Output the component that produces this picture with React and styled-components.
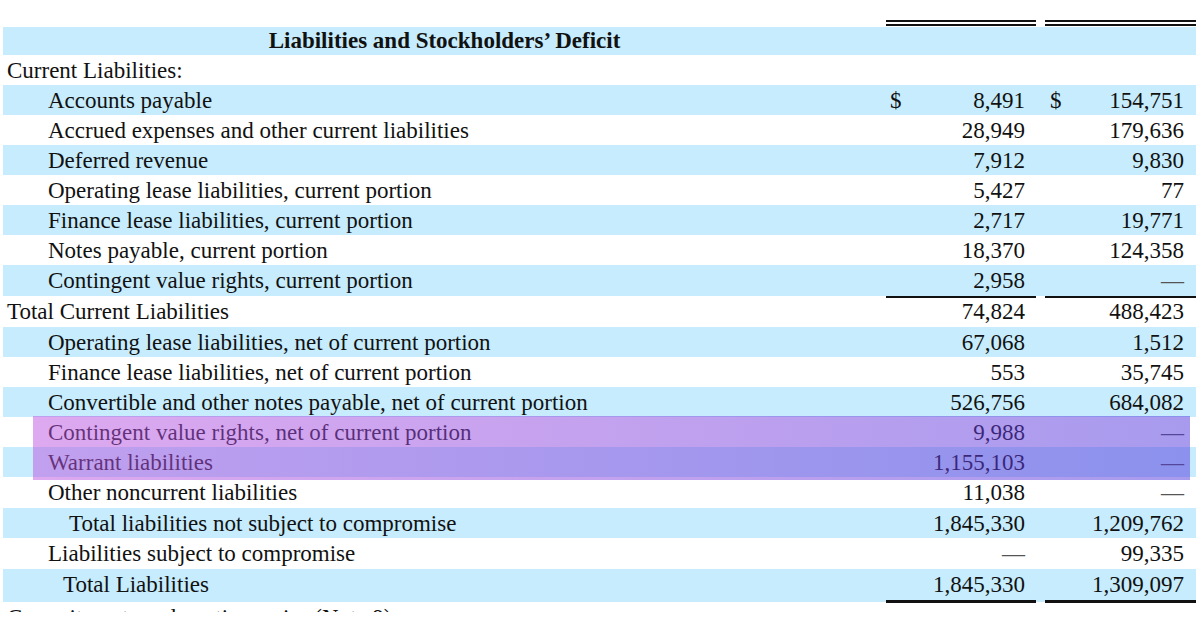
import React from "react";
import styled, { createGlobalStyle } from "styled-components";

const GlobalStyle = createGlobalStyle`
  html, body {
    margin: 0;
    padding: 0;
    background: #ffffff;
  }
`;

const BLUE = "#c6ecfd";

// Balance sheet page
const Page = styled.div`
  width: 1200px;
  height: 612px;
  overflow: hidden;
  background: #ffffff;
  font-family: "Liberation Serif", "Times New Roman", serif;
  font-size: 23px;
  color: #111111;
`;

const Sheet = styled.div`
  margin-left: 3px;
  width: 1193px;
  display: flex;
  flex-direction: column;
`;

const Row = styled.div`
  position: ${(p) => (p.$anchor ? "relative" : "static")};
  display: grid;
  grid-template-columns: 1fr 150px 9px 151px;
  height: ${(p) => p.$h}px;
  background: ${(p) => (p.$blue ? BLUE : "transparent")};
  line-height: 31px;
`;

const TopRule = styled.div`
  display: grid;
  grid-template-columns: 1fr 150px 9px 151px;
  height: 27px;
`;

const DoubleRule = styled.div`
  height: 26px;
  box-sizing: border-box;
  border-bottom: 6px double #111111;
`;

const Label = styled.div`
  padding-left: ${(p) => p.$indent}px;
  white-space: nowrap;
  overflow: hidden;
`;

const Heading = styled.div`
  font-weight: 700;
  text-align: center;
  line-height: 28px;
`;

const Amount = styled.div`
  display: flex;
  justify-content: space-between;
  box-sizing: border-box;
  height: 100%;
  padding-left: ${(p) => p.$padL}px;
  padding-right: ${(p) => p.$padR}px;
  border-bottom: ${(p) =>
    p.$rule === "thick" ? "3px solid #111111" : p.$rule ? "2px solid #111111" : "none"};
  white-space: nowrap;
`;

const Dash = styled.span`
  color: #555555;
`;

const Highlight = styled.div`
  position: absolute;
  z-index: 1;
  top: -1px;
  left: 30px;
  right: 6px;
  height: 64px;
  background: linear-gradient(
    to right,
    rgba(188, 84, 224, 0.5),
    rgba(140, 70, 222, 0.5) 45%,
    rgba(81, 55, 221, 0.5)
  );
  pointer-events: none;
`;

const indents = [4, 45, 66, 60];

const rows = [
  { label: "Current Liabilities:", level: 0 },
  { label: "Accounts payable", level: 1, dollar: true, a: "8,491", b: "154,751" },
  { label: "Accrued expenses and other current liabilities", level: 1, a: "28,949", b: "179,636" },
  { label: "Deferred revenue", level: 1, a: "7,912", b: "9,830" },
  { label: "Operating lease liabilities, current portion", level: 1, a: "5,427", b: "77" },
  { label: "Finance lease liabilities, current portion", level: 1, a: "2,717", b: "19,771" },
  { label: "Notes payable, current portion", level: 1, a: "18,370", b: "124,358" },
  { label: "Contingent value rights, current portion", level: 1, a: "2,958", b: "—", rule: "single" },
  { label: "Total Current Liabilities", level: 0, a: "74,824", b: "488,423", rule: "single" },
  { label: "Operating lease liabilities, net of current portion", level: 1, a: "67,068", b: "1,512" },
  { label: "Finance lease liabilities, net of current portion", level: 1, a: "553", b: "35,745" },
  { label: "Convertible and other notes payable, net of current portion", level: 1, a: "526,756", b: "684,082" },
  { label: "Contingent value rights, net of current portion", level: 1, a: "9,988", b: "—", highlight: true },
  { label: "Warrant liabilities", level: 1, a: "1,155,103", b: "—" },
  { label: "Other noncurrent liabilities", level: 1, a: "11,038", b: "—", rule: "single" },
  { label: "Total liabilities not subject to compromise", level: 2, a: "1,845,330", b: "1,209,762" },
  { label: "Liabilities subject to compromise", level: 1, a: "—", b: "99,335", rule: "single" },
  { label: "Total Liabilities", level: 3, a: "1,845,330", b: "1,309,097", rule: "thick" },
  { label: "Commitments and contingencies (Note 9)", level: 0 },
];

const Value = ({ v }) => (v === "—" ? <Dash>{v}</Dash> : <span>{v}</span>);

const App = () => (
  <>
    <GlobalStyle />
    <Page>
      <Sheet>
        <TopRule>
          <div />
          <DoubleRule />
          <div />
          <DoubleRule />
        </TopRule>
        <Row $h={28} $blue>
          <Heading>Liabilities and Stockholders’ Deficit</Heading>
          <div />
          <div />
          <div />
        </Row>
        {rows.map((r, i) => {
          const h = r.rule === "thick" ? 33 : r.rule ? 31 : 30;
          return (
            <Row key={r.label} $h={h} $blue={i % 2 === 1} $anchor={r.highlight}>
              <Label $indent={indents[r.level]}>{r.label}</Label>
              <Amount $padL={4} $padR={11} $rule={r.rule}>
                <span>{r.dollar ? "$" : ""}</span>
                {r.a && <Value v={r.a} />}
              </Amount>
              <div />
              <Amount $padL={5} $padR={12} $rule={r.rule}>
                <span>{r.dollar ? "$" : ""}</span>
                {r.b && <Value v={r.b} />}
              </Amount>
              {r.highlight && <Highlight />}
            </Row>
          );
        })}
      </Sheet>
    </Page>
  </>
);

export default App;
